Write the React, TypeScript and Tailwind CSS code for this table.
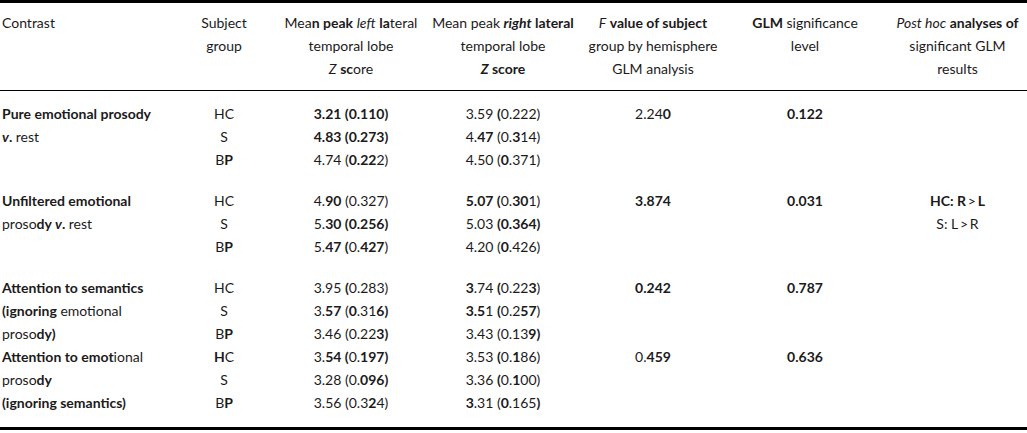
import React from "react";

// *...* toggles bold, _..._ toggles italic (mirrors the odd mixed weights of the source PDF)
const Rich = ({ t }: { t: string }) => {
  const parts: React.ReactNode[] = [];
  let bold = false;
  let italic = false;
  let buf = "";
  let k = 0;
  const flush = () => {
    if (!buf) return;
    parts.push(
      <span key={k++} className={`${bold ? "font-bold" : "font-normal"} ${italic ? "italic" : ""}`}>
        {buf}
      </span>
    );
    buf = "";
  };
  for (const ch of t) {
    if (ch === "*") {
      flush();
      bold = !bold;
    } else if (ch === "_") {
      flush();
      italic = !italic;
    } else buf += ch;
  }
  flush();
  return <>{parts}</>;
};

type Row = {
  label: string;
  group: string;
  left: string;
  right: string;
  f?: string;
  glm?: string;
  post?: string;
};

const groups: Row[][] = [
  [
    { label: "*Pure emotional prosody*", group: "HC", left: "*3.21 (0.110)*", right: "3.59 *(*0.222)", f: "2.24*0*", glm: "*0.122*" },
    { label: "*_v_.* rest", group: "S", left: "*4.83 (0.273)*", right: "4.*47* (0.*3*14)" },
    { label: "", group: "B*P*", left: "4.74 (*0.22*2)", right: "4.50 (*0*.371)" },
  ],
  [
    { label: "*Unfiltered emotional*", group: "HC", left: "4.*90* (0.327)", right: "*5.07 (*0.*30*1)", f: "*3.874*", glm: "*0.031*", post: "*HC: R*\u2009>\u2009*L*" },
    { label: "proso*dy _v_.* rest", group: "S", left: "5.*30 (0.256)*", right: "5.03 *(0.364)*", post: "S: L\u2009>\u2009R" },
    { label: "", group: "B*P*", left: "5.*47 (*0.*427*)", right: "4.20 (*0*.426)" },
  ],
  [
    { label: "*Attention to semantics*", group: "HC", left: "3.95 *(*0.283)", right: "*3*.74 *(*0.22*3*)", f: "*0.242*", glm: "*0.787*" },
    { label: "*(ignoring* emotional", group: "S", left: "3.*57* (*0*.31*6)*", right: "*3.5*1 *(*0.2*57*)" },
    { label: "proso*dy)*", group: "B*P*", left: "3.46 (0.22*3)*", right: "3.43 (0.13*9)*" },
    { label: "*Attention to emot*ional", group: "*H*C", left: "3.*54 (*0.*197)*", right: "3.53 *(*0.*1*86)", f: "0.*459*", glm: "*0.636*" },
    { label: "proso*dy*", group: "S", left: "3.28 (0.*096)*", right: "3.36 *(*0.*1*00)" },
    { label: "*(ignoring semantics)*", group: "B*P*", left: "3.56 (0.3*2*4)", right: "*3*.31 (*0*.165*)*" },
  ],
];

const head: string[][] = [
  ["Contrast"],
  ["Subject", "group"],
  ["Mea*n peak* _left_ *la*teral", "temporal lobe", "_Z_ *sc*ore"],
  ["Mean peak *_right_ lateral*", "temporal lobe", "*_Z_ score*"],
  ["_F_ *value of subject*", "group by hemisphere", "GLM analysis"],
  ["*GLM* significance", "level"],
  ["_Post hoc_ *analyses of*", "significant GLM", "results"],
];

export default function App() {
  return (
    <div
      className="w-[1027px] h-[433px] bg-white text-[14px] text-[#1c1a1b] overflow-hidden"
      style={{ fontFamily: "Lato, 'Open Sans', sans-serif" }}
    >
      <table className="w-full table-fixed border-collapse border-t-[3px] border-b-[3px] border-black">
        <colgroup>
          <col className="w-[168px]" />
          <col className="w-[112px]" />
          <col className="w-[142px]" />
          <col className="w-[162px]" />
          <col className="w-[138px]" />
          <col className="w-[166px]" />
          <col className="w-[139px]" />
        </colgroup>
        <thead>
          <tr className="border-b border-black">
            {head.map((lines, i) => (
              <th
                key={i}
                className={`align-top pt-[8px] pb-[10px] font-normal leading-[23px] whitespace-nowrap ${
                  i === 0 ? "text-left pl-[2px]" : "text-center"
                }`}
              >
                {lines.map((l, j) => (
                  <div key={j}>
                    <Rich t={l} />
                  </div>
                ))}
              </th>
            ))}
          </tr>
        </thead>
        <tbody>
          <tr className="h-[11px]">
            <td colSpan={7} />
          </tr>
          {groups.map((g, gi) => (
            <React.Fragment key={gi}>
              {g.map((r, ri) => (
                <tr key={ri} className="h-[23px] leading-[23px] whitespace-nowrap">
                  <td className="pl-[2px] text-left">
                    <Rich t={r.label} />
                  </td>
                  <td className="text-center">
                    <Rich t={r.group} />
                  </td>
                  <td className="text-center">
                    <Rich t={r.left} />
                  </td>
                  <td className="text-center">
                    <Rich t={r.right} />
                  </td>
                  <td className="text-center">{r.f && <Rich t={r.f} />}</td>
                  <td className="text-center">{r.glm && <Rich t={r.glm} />}</td>
                  <td className="text-center">{r.post && <Rich t={r.post} />}</td>
                </tr>
              ))}
              {gi < groups.length - 1 && (
                <tr className="h-[18px]">
                  <td colSpan={7} />
                </tr>
              )}
            </React.Fragment>
          ))}
          <tr className="h-[15px]">
            <td colSpan={7} />
          </tr>
        </tbody>
      </table>
    </div>
  );
}
